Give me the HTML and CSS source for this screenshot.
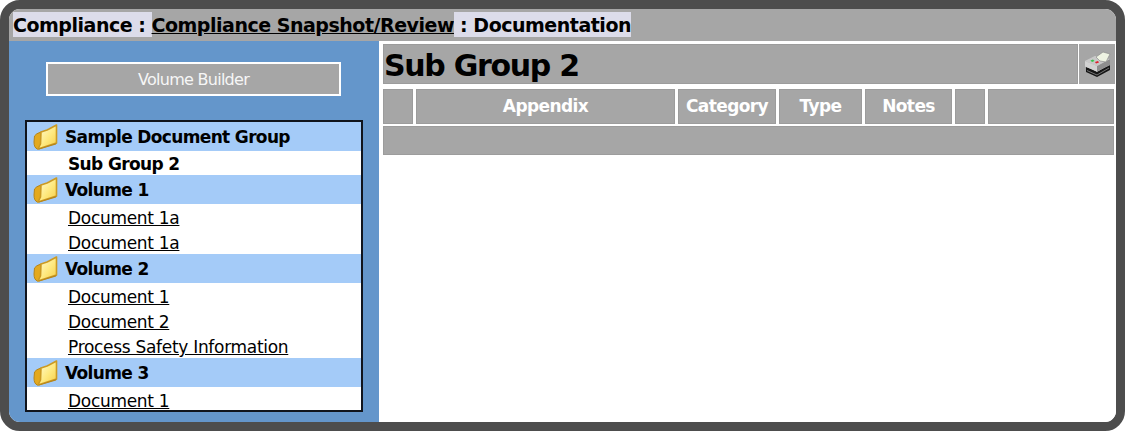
FILE: index.html
```html
<!DOCTYPE html>
<html lang="en">
<head>
<meta charset="utf-8">
<title>Documentation</title>
<link rel="stylesheet" href="styles.css">
</head>
<body>
<svg class="defs" width="0" height="0" aria-hidden="true">
  <defs>
    <linearGradient id="fold" x1="0" y1="0" x2="1" y2="1">
      <stop offset="0" stop-color="#fffcd8"/>
      <stop offset="0.55" stop-color="#fee97f"/>
      <stop offset="1" stop-color="#f6cd45"/>
    </linearGradient>
    <symbol id="folder" viewBox="0 0 25 26">
      <path d="M1.5 12 Q3 9.5 8 8 L8 22 L4.5 25 Q1 24 1 18 Z" fill="#e3a91f" stroke="#b5841a" stroke-width="1"/>
      <path d="M8 8 L14 6 L16 5 L23.5 1 L23.5 19 L5 25 L7.5 20 Z" fill="url(#fold)" stroke="#cc9a22" stroke-width="1.6" stroke-linejoin="round"/>
      <path d="M5 25 L23.5 19 L23 20.5 L6 25.5 Z" fill="#b5841a"/>
    </symbol>
  </defs>
</svg>
<div class="frame">
  <header class="crumbs">
    <span class="crumb">Compliance :&nbsp;</span><a class="crumb-link" href="#">Compliance Snapshot/Review</a><span class="crumb">&nbsp;: Documentation</span>
  </header>
  <div class="body">
    <aside class="side">
      <button class="builder" type="button">Volume Builder</button>
      <nav class="tree">
        <div class="group"><svg class="folder"><use href="#folder"/></svg>Sample Document Group</div>
        <div class="item current">Sub Group 2</div>
        <div class="group"><svg class="folder"><use href="#folder"/></svg>Volume 1</div>
        <a class="item" href="#">Document 1a</a>
        <a class="item" href="#">Document 1a</a>
        <div class="group"><svg class="folder"><use href="#folder"/></svg>Volume 2</div>
        <a class="item" href="#">Document 1</a>
        <a class="item" href="#">Document 2</a>
        <a class="item" href="#">Process Safety Information</a>
        <div class="group"><svg class="folder"><use href="#folder"/></svg>Volume 3</div>
        <a class="item" href="#">Document 1</a>
      </nav>
    </aside>
    <main class="main">
      <div class="title-row">
        <h1 class="title">Sub Group 2</h1>
        <div class="print">
          <svg class="printer" viewBox="0 0 27 26" aria-label="Print">
            <path d="M2 15 L13 21 L26 13 L26 19 L13 26 L2 21 Z" fill="#161616"/>
            <path d="M3 19.5 L13 24 L25 17" fill="none" stroke="#8a8a8a" stroke-width="0.8"/>
            <path d="M1 10 L11 5 L26 8 L26 14 L13 20.5 L1 15.5 Z" fill="#b5b5b5"/>
            <path d="M1 10 L13 15 L13 20.5 L1 15.5 Z" fill="#d2d2d2"/>
            <path d="M13 15 L26 8 L26 14 L13 20.5 Z" fill="#8e8e8e"/>
            <path d="M1 10 L11 5 L26 8 L13 15 Z" fill="#c8c8c8"/>
            <path d="M12 6 L19 1 L26 3 L22 11 L16 10 Z" fill="#eef3e2" stroke="#8d8d8d" stroke-width="0.7"/>
            <path d="M6.5 9.5 L9 8.5 L10.5 10 L8 11 Z" fill="#36c24b"/>
            <path d="M11 11 L14 10 L15 11.5 L12 12.5 Z" fill="#e01f2c"/>
          </svg>
        </div>
      </div>
      <div class="col-row">
        <div class="col"></div>
        <div class="col">Appendix</div>
        <div class="col">Category</div>
        <div class="col">Type</div>
        <div class="col">Notes</div>
        <div class="col"></div>
        <div class="col"></div>
      </div>
      <div class="empty-row"></div>
    </main>
  </div>
</div>
</body>
</html>
```
FILE: styles.css
```css
html, body {
  margin: 0;
  padding: 0;
  background: #fff;
}
.defs {
  position: absolute;
}
.frame {
  box-sizing: border-box;
  width: 1125px;
  height: 431px;
  border: 9px solid #4d4d4d;
  border-radius: 20px;
  overflow: hidden;
  background: #fff;
  display: flex;
  flex-direction: column;
  font-family: "DejaVu Sans", Verdana, sans-serif;
  color: #000;
}
.crumbs {
  box-sizing: border-box;
  height: 32px;
  flex: none;
  background: #a6a6a6;
  padding: 3px 0 0 4px;
  font-size: 19px;
  font-weight: bold;
  letter-spacing: -0.48px;
  line-height: 26px;
  white-space: nowrap;
  display: flex;
  align-items: flex-start;
}
.crumb {
  background: #dcdcea;
  height: 25px;
}
.crumb-link {
  color: #000;
  text-decoration: underline;
}
.body {
  flex: 1;
  display: flex;
  min-height: 0;
}
.side {
  box-sizing: border-box;
  width: 370px;
  flex: none;
  background: #6496cb;
  padding: 21px 16px 0;
  display: flex;
  flex-direction: column;
}
.builder {
  box-sizing: border-box;
  width: 295px;
  height: 34px;
  margin: 0 0 24px 21px;
  flex: none;
  background: #a6a6a6;
  border: 2px solid #fff;
  color: #f6f6f6;
  font-family: "DejaVu Sans", Verdana, sans-serif;
  font-size: 16px;
  letter-spacing: -0.72px;
  padding: 0;
}
.tree {
  box-sizing: border-box;
  width: 338px;
  height: 292px;
  border: 2px solid #10141c;
  background: #fff;
  overflow: hidden;
  display: flex;
  flex-direction: column;
}
.group {
  box-sizing: border-box;
  height: 29px;
  flex: none;
  background: #a4cbf8;
  display: flex;
  align-items: center;
  gap: 7px;
  padding-left: 6px;
  font-size: 17px;
  font-weight: bold;
  letter-spacing: -0.65px;
  white-space: nowrap;
}
.folder {
  width: 25px;
  height: 26px;
  flex: none;
}
.item {
  box-sizing: border-box;
  height: 25px;
  flex: none;
  padding-left: 41px;
  line-height: 29px;
  font-size: 17px;
  letter-spacing: -0.3px;
  color: #000;
  white-space: nowrap;
}
.current {
  height: 24px;
  line-height: 26px;
  font-weight: bold;
  letter-spacing: -0.63px;
}
.main {
  flex: 1;
  min-width: 0;
  padding: 3px 1px 0 4px;
  background: #fff;
  display: flex;
  flex-direction: column;
}
.title-row {
  display: flex;
  gap: 1px;
  height: 40px;
  flex: none;
}
.title {
  margin: 0;
  flex: 1;
  background: #a6a6a6;
  border: 1px solid #9c9c9c;
  font-size: 30px;
  font-weight: bold;
  line-height: 42px;
  padding-left: 0;
  letter-spacing: -1.3px;
}
.print {
  width: 36px;
  background: #a6a6a6;
  display: flex;
  align-items: center;
  justify-content: center;
}
.printer {
  width: 27px;
  height: 26px;
}
.col-row {
  margin-top: 5px;
  height: 31px;
  flex: none;
  display: grid;
  grid-template-columns: 30px 259px 98px 83px 87px 30px 126px;
  column-gap: 3px;
}
.col {
  box-sizing: border-box;
  background: #a6a6a6;
  border: 1px solid #9c9c9c;
  color: #fff;
  font-size: 17px;
  font-weight: bold;
  letter-spacing: -0.6px;
  text-align: center;
  line-height: 33px;
}
.empty-row {
  box-sizing: border-box;
  margin-top: 6px;
  height: 29px;
  width: 731px;
  flex: none;
  background: #a6a6a6;
  border: 1px solid #9c9c9c;
}
```
